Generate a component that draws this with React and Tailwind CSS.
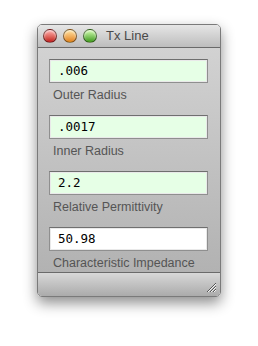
import React from 'react';

const FIELDS = [
  { value: '.006', label: 'Outer Radius', editable: true },
  { value: '.0017', label: 'Inner Radius', editable: true },
  { value: '2.2', label: 'Relative Permittivity', editable: true },
  { value: '50.98', label: 'Characteristic Impedance', editable: false },
];

function Light({ from, to }) {
  return (
    <div
      className={`w-[14px] h-[14px] rounded-full border border-black/45 bg-gradient-to-b ${from} ${to} shadow-[inset_0_1px_2px_rgba(255,255,255,0.7)]`}
    />
  );
}

function Field({ value, label, editable }) {
  return (
    <div className="flex flex-col">
      <div className="h-[24px] border border-[#8f8f8f] border-t-[#6f6f6f] p-[1px] bg-[#e9e9e9]">
        <div
          className={`h-full flex items-center pl-[7px] text-[12.5px] text-black font-['DejaVu_Sans_Mono',monospace] ${
            editable ? 'bg-[#e6ffe6]' : 'bg-white'
          }`}
        >
          {value}
        </div>
      </div>
      <div className="mt-[5px] pl-[4px] leading-[14px] text-[12.5px] text-[#555] font-['Liberation_Sans',sans-serif]">
        {label}
      </div>
    </div>
  );
}

export default function App() {
  return (
    <div className="w-[258px] h-[346px] bg-white pt-[24px] pl-[37px]">
      <div className="w-[184px] h-[273px] flex flex-col rounded-[5px] border border-[#7a7a7a] overflow-hidden shadow-[0_6px_14px_rgba(0,0,0,0.45)]">
        {/* title bar */}
        <div className="h-[23px] shrink-0 flex items-center pl-[5px] gap-[6px] bg-gradient-to-b from-[#e6e6e6] to-[#bdbdbd] border-b border-[#6a6a6a]">
          <Light from="from-[#ffb0b0]" to="to-[#c00812]" />
          <Light from="from-[#ffe4a0]" to="to-[#e08000]" />
          <Light from="from-[#d4ffb0]" to="to-[#389a08]" />
          <span className="ml-[3px] text-[13px] text-[#4a4a4a] font-['Liberation_Sans',sans-serif]">Tx Line</span>
        </div>

        {/* content */}
        <div className="flex-1 flex flex-col gap-[13px] pt-[11px] pl-[11px] pr-[12px] bg-gradient-to-b from-[#d2d2d2] to-[#b2b2b2]">
          {FIELDS.map((f) => (
            <Field key={f.label} {...f} />
          ))}
        </div>

        {/* status bar */}
        <div className="h-[24px] shrink-0 flex items-end justify-end pr-[3px] pb-[3px] bg-gradient-to-b from-[#d8d8d8] to-[#ababab] border-t border-[#6a6a6a]">
          <svg width="11" height="11" viewBox="0 0 11 11">
            <g stroke="#555" strokeWidth="1">
              <line x1="1" y1="10" x2="10" y2="1" />
              <line x1="4" y1="10" x2="10" y2="4" />
              <line x1="7" y1="10" x2="10" y2="7" />
            </g>
            <g stroke="#f4f4f4" strokeWidth="1">
              <line x1="2" y1="10" x2="10" y2="2" />
              <line x1="5" y1="10" x2="10" y2="5" />
              <line x1="8" y1="10" x2="10" y2="8" />
            </g>
          </svg>
        </div>
      </div>
    </div>
  );
}
